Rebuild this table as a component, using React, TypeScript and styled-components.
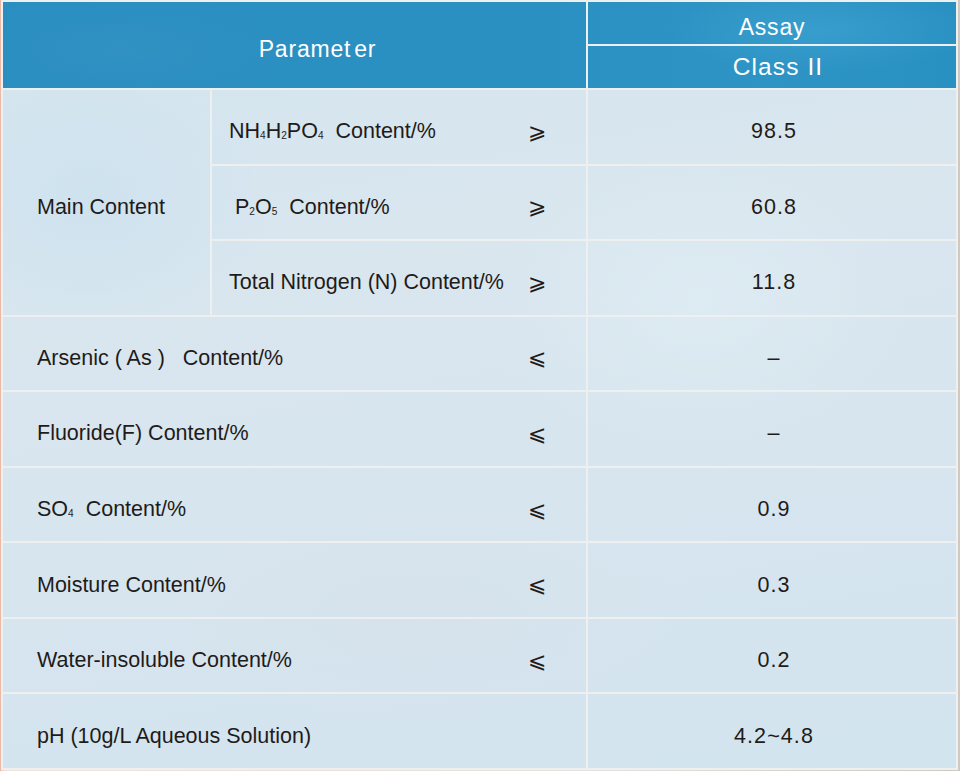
import { Fragment, type ReactNode } from "react";
import styled, { createGlobalStyle } from "styled-components";

const GlobalStyle = createGlobalStyle`
  html, body {
    margin: 0;
    padding: 0;
  }
  body {
    width: 960px;
    height: 771px;
    overflow: hidden;
    background: linear-gradient(90deg, #eab3a0 0px, #efe2dc 4px, #e6e2df 60%, #cfc9c4 100%);
    font-family: "Liberation Sans", Arial, "Noto Sans CJK SC", sans-serif;
    color: #1f1b19;
  }
`;

const lineColor = "#eef0f0";

const Table = styled.div`
  display: grid;
  grid-template-columns: 207px 374px 368px;
  grid-template-rows: 42px 42px repeat(9, 1fr);
  gap: 2px;
  padding: 2px;
  margin-left: 1px;
  width: fit-content;
  height: 766px;
  background: ${lineColor};
`;

const HeadCell = styled.div<{ $span?: boolean; $offset?: number; $drop?: number; $size?: number; $spacing?: number }>`
  grid-column: ${(p) => (p.$span ? "span 2" : "auto")};
  grid-row: ${(p) => (p.$span ? "span 2" : "auto")};
  display: flex;
  align-items: center;
  justify-content: center;
  padding-left: ${(p) => p.$offset ?? 0}px;
  padding-top: ${(p) => p.$drop ?? 0}px;
  box-sizing: border-box;
  color: #ffffff;
  font-size: ${(p) => p.$size ?? 23}px;
  letter-spacing: ${(p) => p.$spacing ?? 0.8}px;
  background:
    radial-gradient(ellipse 220px 60px at 820px 30px, rgba(70, 170, 215, 0.45), transparent 70%),
    radial-gradient(ellipse 260px 80px at 120px 50px, rgba(60, 150, 200, 0.35), transparent 70%),
    linear-gradient(90deg, #2a8ec0 0%, #2a90c2 55%, #2d94c5 80%, #2990c2 100%);
  background-attachment: fixed;
`;

const Gap = styled.span`
  margin-left: 3px;
`;

const bodyBg = `
  background:
    radial-gradient(ellipse 260px 200px at 90px 200px, rgba(205, 226, 238, 0.9), transparent 70%),
    radial-gradient(ellipse 300px 220px at 700px 300px, rgba(222, 236, 244, 0.8), transparent 70%),
    radial-gradient(ellipse 380px 160px at 420px 620px, rgba(214, 226, 236, 0.8), transparent 70%),
    linear-gradient(170deg, #d3e5ef 0%, #d9e6ee 35%, #d7e5ee 60%, #d2e4ee 100%);
  background-attachment: fixed;
`;

const GroupCell = styled.div`
  grid-row: span 3;
  display: flex;
  align-items: center;
  padding: 10px 0 0 34px;
  font-size: 21.5px;
  ${bodyBg}
`;

const NameCell = styled.div<{ $wide?: boolean }>`
  grid-column: ${(p) => (p.$wide ? "span 2" : "auto")};
  display: flex;
  align-items: center;
  justify-content: space-between;
  padding: 10px 40px 0 ${(p) => (p.$wide ? 34 : 17)}px;
  font-size: 21.5px;
  white-space: pre;
  ${bodyBg}
`;

const Symbol = styled.span`
  width: 18px;
  text-align: center;
  font-family: "DejaVu Sans", sans-serif;
  font-size: 22px;
  line-height: 1;
`;

const Sub = styled.span`
  font-size: 0.47em;
  vertical-align: baseline;
  position: relative;
  top: 1px;
`;

const ValueCell = styled.div`
  display: flex;
  align-items: center;
  justify-content: center;
  padding: 10px 0 0 4px;
  font-size: 21.5px;
  letter-spacing: 1.1px;
  ${bodyBg}
`;

type Row = {
  name: ReactNode;
  sign?: "ge" | "le";
  value: string;
};

const mainRows: Row[] = [
  {
    name: (
      <>
        NH<Sub>4</Sub>H<Sub>2</Sub>PO<Sub>4</Sub>{"\u00a0 "}Content/%
      </>
    ),
    sign: "ge",
    value: "98.5",
  },
  {
    name: (
      <>
        {"\u00a0"}P<Sub>2</Sub>O<Sub>5</Sub>{"\u00a0 "}Content/%
      </>
    ),
    sign: "ge",
    value: "60.8",
  },
  { name: "Total Nitrogen (N) Content/%", sign: "ge", value: "11.8" },
];

const otherRows: Row[] = [
  { name: "Arsenic ( As )\u00a0\u00a0 Content/%", sign: "le", value: "\u2013" },
  { name: "Fluoride(F) Content/%", sign: "le", value: "\u2013" },
  {
    name: (
      <>
        SO<Sub>4</Sub>{"\u00a0 "}Content/%
      </>
    ),
    sign: "le",
    value: "0.9",
  },
  { name: "Moisture Content/%", sign: "le", value: "0.3" },
  { name: "Water-insoluble Content/%", sign: "le", value: "0.2" },
  { name: "pH (10g/L Aqueous Solution)", value: "4.2~4.8" },
];

function Sign({ kind }: { kind?: "ge" | "le" }) {
  if (!kind) return null;
  return <Symbol>{kind === "ge" ? "\u2a7e" : "\u2a7d"}</Symbol>;
}

export default function App() {
  return (
    <>
      <GlobalStyle />
      <Table>
        <HeadCell $span $offset={46} $drop={8}>
          Paramet<Gap>er</Gap>
        </HeadCell>
        <HeadCell $drop={8}>Assay</HeadCell>
        <HeadCell $offset={12} $size={24.5} $spacing={1.1}>
          Class II
        </HeadCell>

        <GroupCell>Main Content</GroupCell>
        {mainRows.map((row, i) => (
          <Fragment key={`m${i}`}>
            <NameCell>
              <span>{row.name}</span>
              <Sign kind={row.sign} />
            </NameCell>
            <ValueCell>{row.value}</ValueCell>
          </Fragment>
        ))}

        {otherRows.map((row, i) => (
          <Fragment key={`o${i}`}>
            <NameCell $wide>
              <span>{row.name}</span>
              <Sign kind={row.sign} />
            </NameCell>
            <ValueCell>{row.value}</ValueCell>
          </Fragment>
        ))}
      </Table>
    </>
  );
}
